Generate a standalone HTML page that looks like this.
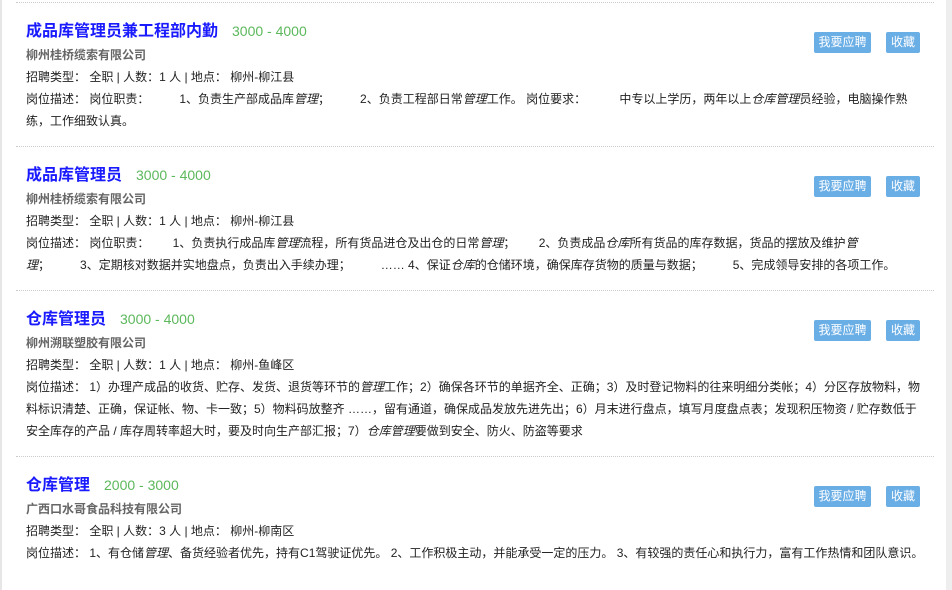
<!DOCTYPE html>
<html><head><meta charset="utf-8"><style>
*{margin:0;padding:0;box-sizing:border-box}
body{width:952px;height:590px;overflow:hidden;background:#fff;font-family:"Liberation Sans","Noto Sans CJK SC",sans-serif;font-size:12px;color:#222;position:relative}
.lb{position:absolute;left:0;top:0;width:2px;height:590px;background:#e6e6e6}
.rb{position:absolute;right:0;top:0;width:6px;height:590px;background:#eee}
.sep{position:absolute;left:16px;width:918px;border-top:1px dotted #ccc}
.blk{position:absolute;left:26px;width:900px}
.t{height:24px;line-height:24px;white-space:nowrap}
.t b{font-size:16px;color:#1a1aff;font-weight:bold}
.t span{font-size:14px;color:#5cb85c;margin-left:14px}
.c{color:#666;font-weight:bold;height:22px;line-height:22px;margin-top:1px}
.l{line-height:22px}
.d{line-height:22px;width:900px}
.btn{position:absolute;top:13px;height:21px;line-height:21px;background:#6aaee6;color:#fff;border-radius:2px;text-align:center;font-size:12px}
.b1{left:788px;width:57px}.b2{left:860px;width:34px}
i{font-style:italic}
</style></head><body>
<div class="lb"></div><div class="rb"></div>
<div class="sep" style="top:2px"></div>
<div class="blk" style="top:19px">
<div class="t"><b>成品库管理员兼工程部内勤</b><span>3000 - 4000</span></div>
<div class="c">柳州桂桥缆索有限公司</div>
<div class="l">招聘类型： 全职 | 人数：1 人 | 地点： 柳州-柳江县</div>
<div class="d">岗位描述： 岗位职责：&nbsp;&nbsp;&nbsp;&nbsp;&nbsp;&nbsp;&nbsp;&nbsp;&nbsp;1、负责生产部成品库<i>管理</i>；&nbsp;&nbsp;&nbsp;&nbsp;&nbsp;&nbsp;&nbsp;&nbsp;&nbsp;2、负责工程部日常<i>管理</i>工作。 岗位要求：&nbsp;&nbsp;&nbsp;&nbsp;&nbsp;&nbsp;&nbsp;&nbsp;&nbsp;&nbsp;中专以上学历，两年以上<i>仓库管理</i>员经验，电脑操作熟练，工作细致认真。</div>
<div class="btn b1">我要应聘</div><div class="btn b2">收藏</div>
</div>
<div class="sep" style="top:146px"></div>
<div class="blk" style="top:163px">
<div class="t"><b>成品库管理员</b><span>3000 - 4000</span></div>
<div class="c">柳州桂桥缆索有限公司</div>
<div class="l">招聘类型： 全职 | 人数：1 人 | 地点： 柳州-柳江县</div>
<div class="d">岗位描述： 岗位职责：&nbsp;&nbsp;&nbsp;&nbsp;&nbsp;&nbsp;&nbsp;1、负责执行成品库<i>管理</i>流程，所有货品进仓及出仓的日常<i>管理</i>；&nbsp;&nbsp;&nbsp;&nbsp;&nbsp;&nbsp;&nbsp;2、负责成品<i>仓库</i>所有货品的库存数据，货品的摆放及维护<i>管理</i>；&nbsp;&nbsp;&nbsp;&nbsp;&nbsp;&nbsp;&nbsp;&nbsp;&nbsp;3、定期核对数据并实地盘点，负责出入手续办理；&nbsp;&nbsp;&nbsp;&nbsp;&nbsp;&nbsp;&nbsp;&nbsp;&nbsp;…… 4、保证<i>仓库</i>的仓储环境，确保库存货物的质量与数据；&nbsp;&nbsp;&nbsp;&nbsp;&nbsp;&nbsp;&nbsp;&nbsp;&nbsp;5、完成领导安排的各项工作。</div>
<div class="btn b1">我要应聘</div><div class="btn b2">收藏</div>
</div>
<div class="sep" style="top:290px"></div>
<div class="blk" style="top:307px">
<div class="t"><b>仓库管理员</b><span>3000 - 4000</span></div>
<div class="c">柳州溯联塑胶有限公司</div>
<div class="l">招聘类型： 全职 | 人数：1 人 | 地点： 柳州-鱼峰区</div>
<div class="d">岗位描述： 1）办理产成品的收货、贮存、发货、退货等环节的<i>管理</i>工作；2）确保各环节的单据齐全、正确；3）及时登记物料的往来明细分类帐；4）分区存放物料，物料标识清楚、正确，保证帐、物、卡一致；5）物料码放整齐 ……，留有通道，确保成品发放先进先出；6）月末进行盘点，填写月度盘点表；发现积压物资 / 贮存数低于安全库存的产品 / 库存周转率超大时，要及时向生产部汇报；7）<i>仓库管理</i>要做到安全、防火、防盗等要求</div>
<div class="btn b1">我要应聘</div><div class="btn b2">收藏</div>
</div>
<div class="sep" style="top:456px"></div>
<div class="blk" style="top:473px">
<div class="t"><b>仓库管理</b><span>2000 - 3000</span></div>
<div class="c">广西口水哥食品科技有限公司</div>
<div class="l">招聘类型： 全职 | 人数：3 人 | 地点： 柳州-柳南区</div>
<div class="d">岗位描述： 1、有仓储<i>管理</i>、备货经验者优先，持有C1驾驶证优先。 2、工作积极主动，并能承受一定的压力。 3、有较强的责任心和执行力，富有工作热情和团队意识。</div>
<div class="btn b1">我要应聘</div><div class="btn b2">收藏</div>
</div>
</body></html>
